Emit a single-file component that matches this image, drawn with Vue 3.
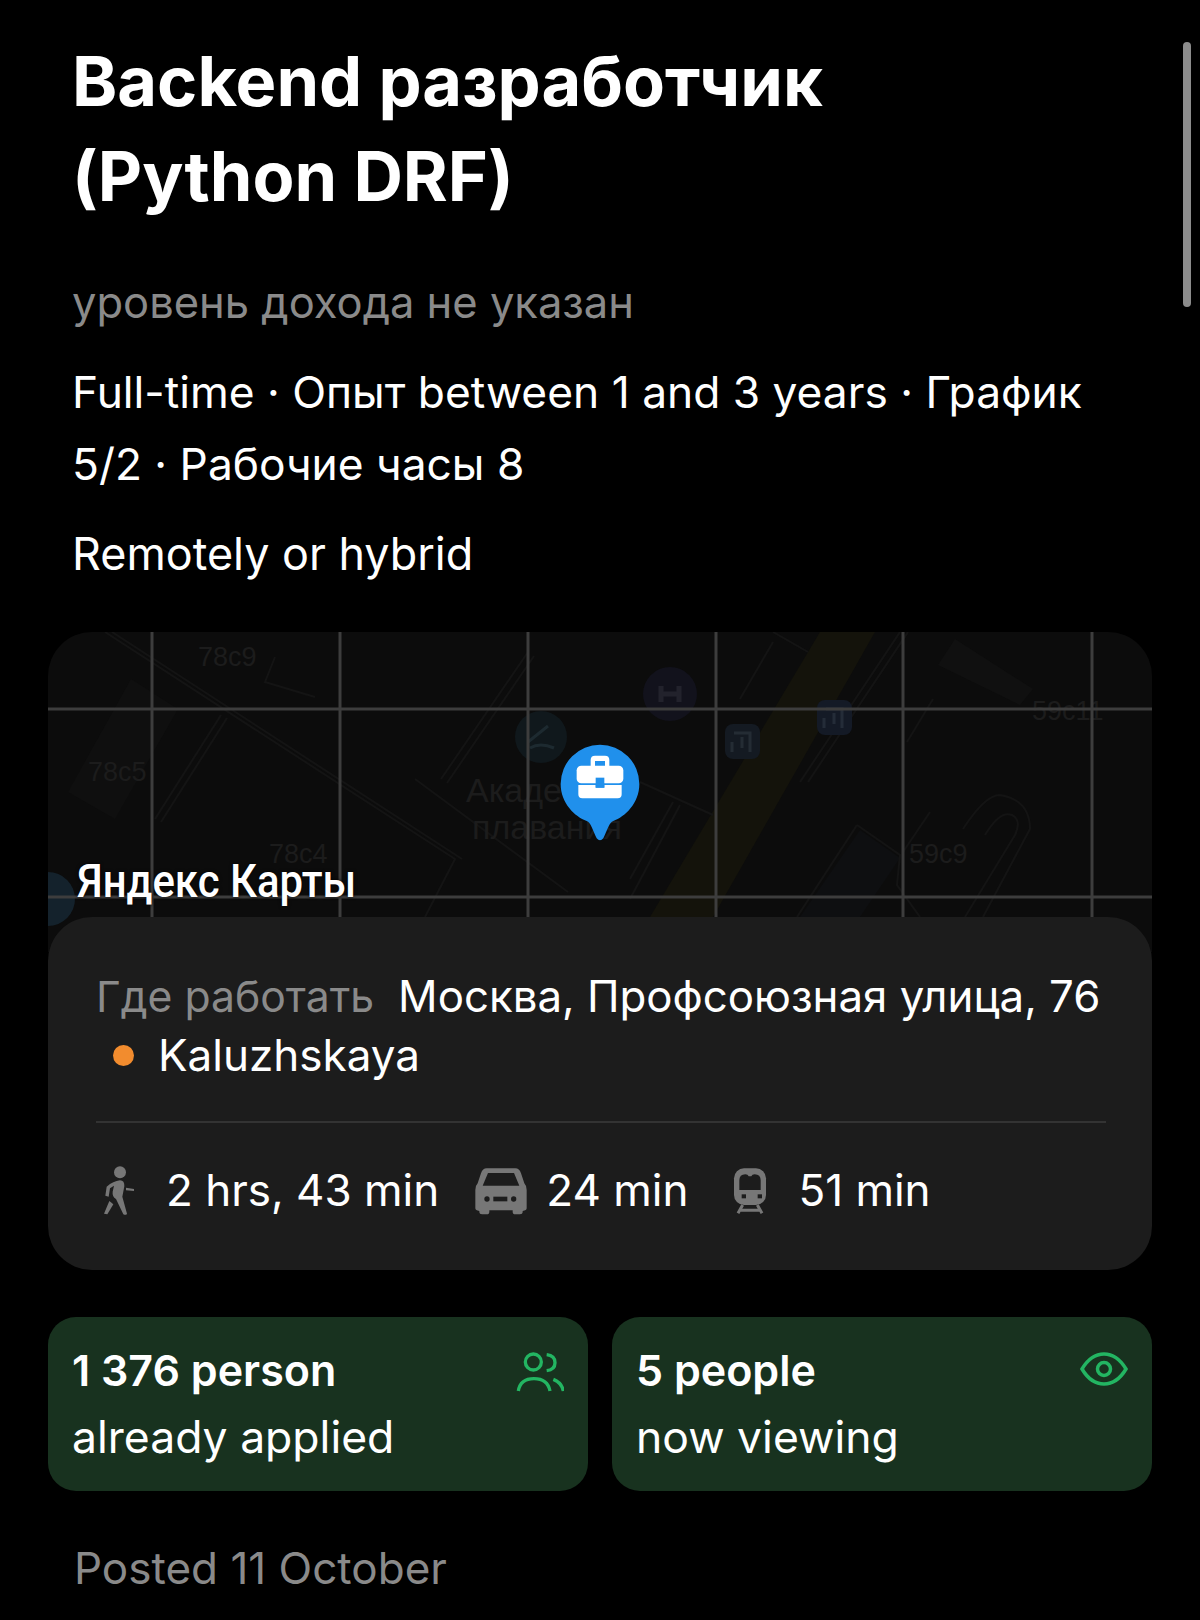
<script setup>
const gridX = [152, 340, 528, 716, 903, 1092]
const gridY = [709, 897]

// faint building outlines on the map, in page coordinates
const mapLines = [
  'M105 632 L455 859 L425 917',
  'M112 632 L462 859',
  'M221 715 L155 819',
  'M227 718 L161 822',
  'M528 652 L441 779',
  'M534 656 L447 783',
  'M415 779 L568 892',
  'M275 657 L265 682 L315 697',
  'M900 632 L800 782',
  'M908 632 L808 782',
  'M857 825 L797 917',
  'M857 825 L900 855 L897 885 L920 917',
  'M673 802 L630 879',
  'M680 805 L630 899',
  'M713 815 L640 782',
  'M773 642 L740 699',
  'M808 652 L773 632',
  'M933 699 L907 742',
  'M930 812 L903 852',
  'M963 829 Q985 795 1000 795 Q1030 800 1030 829 L983 917',
  'M985 835 Q1000 810 1012 815 Q1022 820 1015 835 L965 917'
]

const transport = [
  { type: 'walk', label: '2 hrs, 43 min' },
  { type: 'car', label: '24 min' },
  { type: 'train', label: '51 min' }
]
</script>

<template>
  <div class="page">
    <div class="scrollbar"></div>

    <header class="head">
      <h1 class="title">Backend разработчик<br />(Python DRF)</h1>
      <p class="salary">уровень дохода не указан</p>
      <p class="terms">Full-time · Опыт between 1 and 3 years · График 5/2 · Рабочие часы 8</p>
      <p class="remote">Remotely or hybrid</p>
    </header>

    <section class="location">
      <div class="map">
        <svg class="map-art" viewBox="48 632 1104 320" width="1104" height="320">
          <path d="M820 632 L875 632 L713 917 L650 917 Z" fill="#14130b" />
          <path d="M131 679 L178 709 L115 819 L68 792 Z" fill="#0f0f0f" />
          <path d="M955 639 L1033 689 L1020 705 L938 665 Z" fill="#101010" />
          <path d="M860 830 L900 858 L860 917 L800 917 Z" fill="#0e0f11" />
          <path v-for="(d, i) in mapLines" :key="i" :d="d" fill="none" stroke="#141414" stroke-width="2" />
          <g fill="#1c1c1c" font-family="'Liberation Sans', sans-serif" font-size="27">
            <text x="198" y="666">78c9</text>
            <text x="88" y="781">78c5</text>
            <text x="269" y="863">78c4</text>
            <text x="1032" y="720">59c11</text>
            <text x="909" y="863">59c9</text>
            <text x="466" y="802" font-size="34">Акаде</text>
            <text x="472" y="839" font-size="34">плавания</text>
          </g>
          <circle cx="541" cy="737" r="26" fill="#10181c" />
          <path d="M528 742 L548 726 M530 748 Q540 742 554 748" fill="none" stroke="#1d2a30" stroke-width="3" />
          <circle cx="670" cy="694" r="27" fill="#12121c" />
          <path d="M661 686 V702 M679 686 V702 M661 694 H679" fill="none" stroke="#22222c" stroke-width="5" />
          <circle cx="48" cy="899" r="27" fill="#14222c" />
          <rect x="725" y="724" width="35" height="35" rx="8" fill="#141a22" />
          <path d="M734 733 H750 V752 M742 737 V748 M732 742 V752" fill="none" stroke="#242c34" stroke-width="3" />
          <rect x="817" y="700" width="35" height="35" rx="8" fill="#141a26" />
          <path d="M826 709 H842 V728 M834 713 V724 M824 718 V728" fill="none" stroke="#242c38" stroke-width="3" />
          <line v-for="x in gridX" :key="x" :x1="x" :x2="x" y1="632" y2="952" stroke="#3d3d3d" stroke-width="3" />
          <line v-for="y in gridY" :key="y" x1="48" x2="1152" :y1="y" :y2="y" stroke="#3d3d3d" stroke-width="3" />
        </svg>
        <svg class="pin" viewBox="0 0 300 330" width="100" height="110">
          <path d="M150 29A118 118 0 0 1 268 147C268 205 225 245 190 258C178 262 172 285 160 310Q150 322 140 310C128 285 122 262 110 258C75 245 32 205 32 147A118 118 0 0 1 150 29Z" fill="#2090ec" />
          <path d="M122 95V75Q122 62 135 62H165Q178 62 178 75V95H165V78H135V95Z" fill="#fff" />
          <rect x="80" y="92" width="140" height="53" rx="14" fill="#fff" />
          <path d="M85 150H137V158H163V150H215V178Q215 190 203 190H97Q85 190 85 178Z" fill="#fff" />
          <rect x="137" y="128" width="26" height="30" fill="#2090ec" />
        </svg>
        <span class="map-brand">Яндекс Карты</span>
      </div>

      <div class="address-card">
        <div class="address">
          <span class="address-label">Где работать</span>
          <span class="address-value">Москва, Профсоюзная улица, 76</span>
        </div>
        <div class="metro">
          <span class="metro-dot"></span>
          <span>Kaluzhskaya</span>
        </div>
        <div class="divider"></div>
        <div class="transport">
          <div v-for="t in transport" :key="t.type" class="transport-item" :class="t.type">
            <svg v-if="t.type === 'walk'" viewBox="0 0 180 210" width="60" height="70" fill="#777">
              <circle cx="90" cy="52" r="18" />
              <path d="M50 95Q70 78 90 76Q104 76 103 94L97 125L111 176Q108 182 100 178L78 132Q66 125 68 110L72 92L60 100L56 125L46 122Z" />
              <path d="M58 138L70 148L52 178L42 176Z" />
              <path d="M108 98L132 102V108L108 106Z" />
            </svg>
            <svg v-else-if="t.type === 'car'" viewBox="0 0 210 210" width="70" height="70">
              <path d="M62 40H148Q160 40 165 55L175 85Q182 92 182 105V160Q182 166 170 168V172Q170 178 162 178H148Q140 178 140 170V166H70V170Q70 178 62 178H48Q40 178 40 172V168Q28 166 28 160V105Q28 92 35 85L45 55Q50 40 62 40Z" fill="#777" />
              <path d="M66 54H144L160 92H50Z" fill="#1c1c1c" />
              <circle cx="63" cy="132" r="8" fill="#1c1c1c" />
              <circle cx="143" cy="132" r="8" fill="#1c1c1c" />
              <rect x="82" y="125" width="42" height="14" fill="#1c1c1c" />
            </svg>
            <svg v-else viewBox="0 0 210 210" width="70" height="70">
              <rect x="42" y="40" width="96" height="110" rx="30" fill="#777" />
              <path d="M58 76Q58 58 76 58Q84 58 86 64H94Q96 58 104 58Q122 58 122 76V105H58Z" fill="#1c1c1c" />
              <rect x="65" y="118" width="13" height="12" fill="#1c1c1c" />
              <rect x="113" y="118" width="13" height="12" fill="#1c1c1c" />
              <path d="M68 150L54 175M112 150L126 175M60 166H120" fill="none" stroke="#777" stroke-width="9" />
            </svg>
            <span>{{ t.label }}</span>
          </div>
        </div>
      </div>
    </section>

    <section class="stats">
      <div class="stat">
        <div>
          <div class="stat-num">1 376 person</div>
          <div class="stat-text">already applied</div>
        </div>
        <svg class="stat-icon" viewBox="33 20 144 120" width="48" height="40" fill="none" stroke="#23b562" stroke-width="10">
          <circle cx="85" cy="50" r="24" />
          <path d="M125 28C142 30 150 40 150 52S142 74 125 76" />
          <path d="M40 137C44 112 62 100 87 100S130 112 135 137" />
          <path d="M145 102C160 108 172 120 175 137" />
        </svg>
      </div>
      <div class="stat">
        <div>
          <div class="stat-num">5 people</div>
          <div class="stat-text">now viewing</div>
        </div>
        <svg class="stat-icon" viewBox="0 0 48 34" width="48" height="34" fill="none" stroke="#23b562" stroke-width="3.500">
          <path d="M2 17C8 7 15 2 24 2s16 5 22 15c-6 10-13 15-22 15S8 27 2 17Z" />
          <circle cx="24" cy="17" r="6.500" />
        </svg>
      </div>
    </section>

    <p class="posted">Posted 11 October</p>
  </div>
</template>

<style scoped>
.page {
  position: relative;
  width: 1200px;
  height: 1620px;
  overflow: hidden;
  background: #000;
  color: #fff;
  font-family: Inter, "Noto Sans", sans-serif;
}
.scrollbar {
  position: absolute;
  top: 42px;
  right: 9px;
  width: 8px;
  height: 265px;
  border-radius: 4px;
  background: #8c8c8c;
}
.head {
  padding: 34px 72px 0 72px;
}
.title {
  margin: 0;
  font-size: 68.500px;
  line-height: 95px;
  font-weight: 700;
}
.salary {
  margin: 50px 0 0;
  font-size: 43.500px;
  line-height: 56px;
  color: #8a8a8a;
}
.terms {
  margin: 26px 0 0;
  font-size: 44.300px;
  line-height: 72px;
}
.remote {
  margin: 18px 0 0;
  font-size: 44.900px;
  line-height: 72px;
}
.location {
  margin: 42px 48px 0;
}
.map {
  position: relative;
  height: 320px;
  border-radius: 44px 44px 0 0;
  overflow: hidden;
  background: #0c0c0c;
}
.map-art {
  display: block;
}
.pin {
  position: absolute;
  left: 502px;
  top: 103px;
}
.map-brand {
  position: absolute;
  left: 29px;
  top: 230px;
  font-family: Roboto, "Liberation Sans", sans-serif;
  font-size: 46px;
  line-height: 38px;
  font-weight: 500;
  white-space: nowrap;
  transform: scaleX(0.91);
  transform-origin: left center;
  text-shadow: 0 0 4px #000;
}
.address-card {
  position: relative;
  margin-top: -35px;
  padding: 51px 46px 45px 48px;
  border-radius: 44px;
  background: #1c1c1c;
  font-size: 44px;
  line-height: 58px;
}
.address {
  display: flex;
  gap: 24px;
  white-space: nowrap;
}
.address-label {
  font-size: 42.700px;
  color: #8a8a8a;
}
.address-value {
  font-size: 43.800px;
}
.metro {
  display: flex;
  align-items: center;
  padding-left: 17px;
  gap: 24px;
}
.metro-dot {
  width: 21px;
  height: 21px;
  border-radius: 50%;
  background: #f28c2e;
}
.divider {
  height: 2px;
  margin: 37px 0 32px;
  background: #333;
}
.transport {
  display: flex;
  align-items: center;
}
.transport-item {
  display: flex;
  align-items: center;
}
.walk {
  gap: 16px;
  margin-left: -6px;
}
.car {
  gap: 10px;
  margin-left: 27px;
}
.train {
  gap: 8px;
  margin-left: 32px;
}
.stats {
  display: grid;
  grid-template-columns: 540px 540px;
  gap: 24px;
  margin: 47px 48px 0;
}
.stat {
  display: flex;
  justify-content: space-between;
  align-items: flex-start;
  height: 174px;
  padding: 20px 24px;
  box-sizing: border-box;
  border-radius: 28px;
  background: #18321f;
  font-size: 44.500px;
  line-height: 66px;
}
.stat-num {
  font-size: 43px;
  font-weight: 600;
}
.stat-text {
  margin-top: 1px;
}
.stat-icon {
  margin-top: 15px;
}
.posted {
  margin: 44px 0 0 74px;
  font-size: 44px;
  line-height: 66px;
  color: #8a8a8a;
}
</style>
